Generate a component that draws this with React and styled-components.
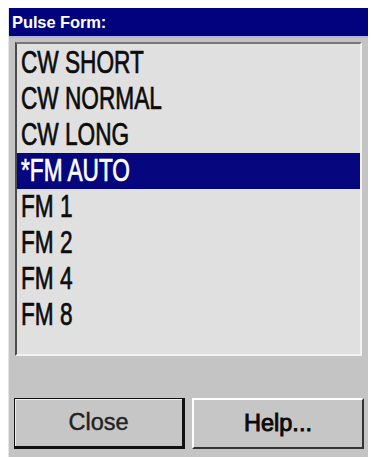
import styled, { createGlobalStyle } from 'styled-components';

const items = ['CW SHORT', 'CW NORMAL', 'CW LONG', '*FM AUTO', 'FM 1', 'FM 2', 'FM 4', 'FM 8'];
const selectedIndex = 3;

const GlobalStyle = createGlobalStyle`
    html, body {
        margin: 0;
        padding: 0;
        background: #fff;
    }
    * {
        box-sizing: border-box;
    }
`;

const App = () => {
    return (
        <>
            <GlobalStyle />
            <Dialog>
                <TitleBar>Pulse Form:</TitleBar>
                <Body>
                    <ListBox>
                        {items.map((item, i) => (
                            <Row key={item} selected={i === selectedIndex}>
                                <Label>{item}</Label>
                            </Row>
                        ))}
                    </ListBox>
                </Body>
                <Footer>
                    <Button primary>Close</Button>
                    <Button heavy>Help...</Button>
                </Footer>
            </Dialog>
        </>
    );
};

export default App;

const Dialog = styled.div`
    width: 360px;
    height: 449px;
    margin: 8px 0 0 8px;
    background: #c4c4c4;
    display: flex;
    flex-direction: column;
    border-left: 1px solid #e4e4e4;
`;

const TitleBar = styled.div`
    height: 30px;
    padding-left: 3px;
    display: flex;
    align-items: center;
    background: #02027e;
    color: #fff;
    font-family: "Liberation Sans", Arial, sans-serif;
    font-weight: bold;
    font-size: 16.5px;
    letter-spacing: -0.1px;
    border-bottom: 2px solid #b4b4e0;
`;

const Body = styled.div`
    padding: 4px 6px 0 6px;
`;

const ListBox = styled.div`
    height: 314px;
    padding-top: 1px;
    background: #e0e0e0;
    border-top: 2px solid #777;
    border-left: 2px solid #4a4a4a;
    border-right: 2px solid #f2f2f2;
    border-bottom: 2px solid #f2f2f2;
`;

const Row = styled.div`
    height: 36px;
    padding-left: 4px;
    display: flex;
    align-items: center;
    overflow: hidden;
    background: ${props => props.selected ? '#06067e' : 'transparent'};
    color: ${props => props.selected ? '#fff' : '#0c0c0c'};
`;

const Label = styled.span`
    display: inline-block;
    white-space: nowrap;
    font-family: "Liberation Sans", Arial, sans-serif;
    font-size: 31px;
    line-height: 36px;
    -webkit-text-stroke: 0.7px currentColor;
    transform: scaleX(0.73);
    transform-origin: left center;
`;

const Footer = styled.div`
    margin-top: 42px;
    padding: 0 4px 0 5px;
    display: grid;
    grid-template-columns: 171px 172px;
    column-gap: 7px;
`;

const Button = styled.button`
    height: 51px;
    padding: 0;
    background: #c6c6c6;
    font-family: "Liberation Sans", Arial, sans-serif;
    font-size: 23.5px;
    font-weight: normal;
    color: ${props => props.heavy ? '#0a0a0a' : '#222'};
    -webkit-text-stroke: ${props => props.heavy ? '0.9px' : '0.4px'} currentColor;
    cursor: pointer;
    border-style: solid;
    border-color: ${props => props.primary ? '#111' : '#fff #333 #333 #fff'};
    border-width: ${props => props.primary ? '1px 3px 3px 1px' : '2px'};
    box-shadow: ${props => props.primary ? 'inset 1px 1px 0 #eee' : 'none'};
`;
